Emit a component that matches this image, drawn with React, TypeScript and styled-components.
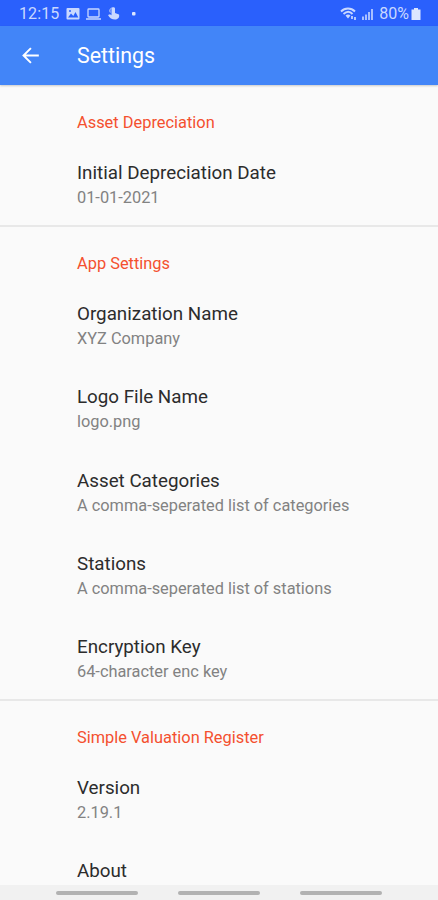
import React from 'react';
import styled, { createGlobalStyle } from 'styled-components';

const GlobalStyle = createGlobalStyle`
  * { box-sizing: border-box; }
  body { margin: 0; background: #fafafa; font-family: Roboto, "Liberation Sans", sans-serif; }
`;

const Screen = styled.div`
  width: 438px;
  height: 900px;
  display: flex;
  flex-direction: column;
  overflow: hidden;
  background: #fafafa;
`;

const StatusBar = styled.header`
  flex: none;
  height: 26px;
  padding: 1px 17px 0 19px;
  display: flex;
  align-items: center;
  justify-content: space-between;
  background: #2a60fc;
  color: #c9d8ff;
  font-size: 16px;
`;

const StatusGroup = styled.div`
  display: flex;
  align-items: center;
`;

const Clock = styled.span`
  width: 47px;
  letter-spacing: 0.1px;
`;

const Battery = styled.span`
  margin: 0 2px 0 3px;
`;

const AppBar = styled.div`
  flex: none;
  height: 59px;
  padding: 0 20px;
  display: flex;
  align-items: center;
  gap: 36px;
  background: #4285f8;
  color: #fff;
  box-shadow: 0 1px 2px rgba(0, 0, 0, 0.2);
  z-index: 1;
`;

const Title = styled.h1`
  margin: 0;
  font-size: 21.4px;
  line-height: 25px;
  font-weight: 400;
`;

const Content = styled.main`
  flex: 1;
  min-height: 0;
`;

const Section = styled.section`
  padding: 27px 0 15.4px 77px;
  & + & {
    padding-top: 26px;
    border-top: 2px solid #e8e8e8;
  }
`;

const SectionTitle = styled.h2`
  margin: 0 0 27.2px;
  font-size: 16.4px;
  line-height: 22px;
  font-weight: 400;
  color: #f4502f;
`;

const Row = styled.div`
  height: 48px;
  & + & { margin-top: 35.4px; }
`;

const RowTitle = styled.div`
  font-size: 18.8px;
  line-height: 25px;
  color: #2c2c2c;
`;

const RowSummary = styled.div`
  font-size: 16.35px;
  line-height: 24px;
  color: #828282;
`;

const NavBar = styled.nav`
  flex: none;
  height: 15px;
  padding: 0 56px;
  display: flex;
  align-items: center;
  justify-content: space-between;
  background: #f1f1f1;
`;

const NavHandle = styled.span`
  width: 82px;
  height: 4px;
  border-radius: 2px;
  background: #b2b2b2;
`;

const sections = [
  { title: 'Asset Depreciation', rows: [['Initial Depreciation Date', '01-01-2021']] },
  {
    title: 'App Settings',
    rows: [
      ['Organization Name', 'XYZ Company'],
      ['Logo File Name', 'logo.png'],
      ['Asset Categories', 'A comma-seperated list of categories'],
      ['Stations', 'A comma-seperated list of stations'],
      ['Encryption Key', '64-character enc key'],
    ],
  },
  { title: 'Simple Valuation Register', rows: [['Version', '2.19.1'], ['About', '']] },
];

export default function App() {
  return (
    <Screen>
      <GlobalStyle />
      <StatusBar>
        <StatusGroup>
          <Clock>12:15</Clock>
          <svg width="72" height="16" viewBox="0 0 72 16" fill="none">
            <rect x="0.5" y="2" width="13" height="11.5" rx="1" fill="#c9d8ff" />
            <path d="M2 11.5 5 7.500l2.300 2.500L9.500 6l2.800 5.500Z" fill="#2a60fc" />
            <circle cx="4" cy="5" r="1" fill="#2a60fc" />
            <rect x="22" y="3" width="11" height="8" rx="0.8" stroke="#c9d8ff" strokeWidth="1.3" />
            <path d="M20 13h15" stroke="#c9d8ff" strokeWidth="1.5" />
            <path d="M45.500 2.500c0-1.700 3.500-1.700 3.500 0V7l4 1.500c.8 2.500-.8 5-4 5-3 0-5.500-1.500-7-4.500l2-.7 1.500 1Z" fill="#c9d8ff" />
            <path d="M44.300 6.500c-1.200-2 0-4 1.200-4.500" stroke="#c9d8ff" />
            <rect x="66" y="6" width="3.500" height="3.500" rx="1" fill="#dce6ff" />
          </svg>
        </StatusGroup>
        <StatusGroup>
          <svg width="36" height="16" viewBox="0 0 36 16" fill="none" stroke="#c9d8ff">
            <path d="M1 5.500c4-4 10-4 14 0M3.500 8c3-2.700 6.500-2.700 9 0" strokeWidth="1.900" />
            <path d="M5.500 9.500c1.500-1.400 3.500-1.400 5 0L8 12.500Z" fill="#c9d8ff" stroke="none" />
            <path d="M12 10v3M15 11v3" strokeWidth="1.700" />
            <path d="M23 10.500V14M26 8.500V14M29 6v8M32 3v11" strokeWidth="1.600" />
          </svg>
          <Battery>80%</Battery>
          <svg width="10" height="14" viewBox="0 0 10 14" fill="#dce6ff">
            <path d="M3 1h4v1.500h2.500v10.500H.5V2.500H3Z" />
          </svg>
        </StatusGroup>
      </StatusBar>
      <AppBar>
        <svg width="21" height="21" viewBox="0 0 24 24" fill="none" stroke="#fff" strokeWidth="2.2">
          <path d="M21.500 12H4M12.500 3.500 4 12l8.500 8.500" />
        </svg>
        <Title>Settings</Title>
      </AppBar>
      <Content>
        {sections.map((s) => (
          <Section key={s.title}>
            <SectionTitle>{s.title}</SectionTitle>
            {s.rows.map(([title, summary]) => (
              <Row key={title}>
                <RowTitle>{title}</RowTitle>
                {summary && <RowSummary>{summary}</RowSummary>}
              </Row>
            ))}
          </Section>
        ))}
      </Content>
      <NavBar><NavHandle /><NavHandle /><NavHandle /></NavBar>
    </Screen>
  );
}
